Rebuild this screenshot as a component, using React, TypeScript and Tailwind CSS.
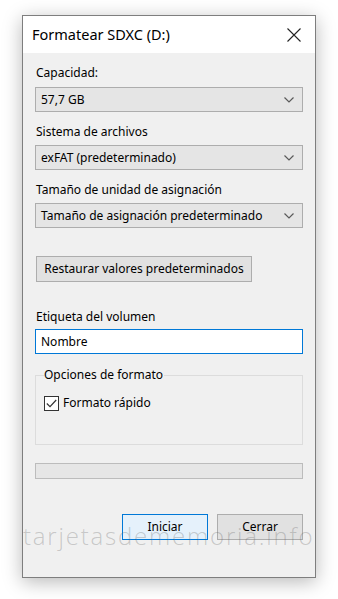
import React from "react";

const font = { fontFamily: '"Noto Sans", "Segoe UI", Arial, sans-serif' };

function Chevron() {
  return (
    <svg width="10" height="6" viewBox="0 0 10 6" className="shrink-0">
      <path d="M0.5 0.5 L5 5 L9.5 0.5" fill="none" stroke="#5a5a5a" strokeWidth="1.2" />
    </svg>
  );
}

function Select({ value }: { value: string }) {
  return (
    <div className="flex h-[25px] items-center justify-between border border-[#adadad] bg-[#e5e5e5] pl-[5px] pr-[8px] text-[12px] text-black">
      <span className="whitespace-nowrap">{value}</span>
      <Chevron />
    </div>
  );
}

function Label({ children, className = "" }: { children: React.ReactNode; className?: string }) {
  return <div className={"h-[16px] whitespace-nowrap pl-[1px] text-[12px] leading-[16px] text-black " + className}>{children}</div>;
}

export default function App() {
  return (
    <div className="relative h-[599px] w-[338px] overflow-hidden bg-white" style={font}>
      <div className="ml-[22px] mt-[15px] flex h-[563px] w-[294px] flex-col border border-[#7e7e7e] bg-[#f0f0f0] shadow-[0_4px_18px_rgba(0,0,0,0.28)]">
        <div className="flex h-[37px] shrink-0 items-center justify-between bg-white pl-[9px] pr-[14px]">
          <span className="text-[14.5px] text-black">Formatear SDXC (D:)</span>
          <svg width="14" height="14" viewBox="0 0 14 14">
            <path d="M0.5 0.5 L13.5 13.5 M13.5 0.5 L0.5 13.5" stroke="#222" strokeWidth="1.1" />
          </svg>
        </div>
        <div className="flex flex-col px-[12px] pt-[12px]">
          <Label>Capacidad:</Label>
          <div className="mt-[6px]">
            <Select value="57,7 GB" />
          </div>
          <Label className="mt-[12px]">Sistema de archivos</Label>
          <div className="mt-[5px]">
            <Select value="exFAT (predeterminado)" />
          </div>
          <Label className="mt-[12px]">Tamaño de unidad de asignación</Label>
          <div className="mt-[5px]">
            <Select value="Tamaño de asignación predeterminado" />
          </div>
          <div className="mt-[28px] flex">
            <div className="ml-[1px] flex h-[26px] w-[216px] items-center justify-center whitespace-nowrap border border-[#adadad] bg-[#e1e1e1] text-[12px] text-black">
              Restaurar valores predeterminados
            </div>
          </div>
          <Label className="mt-[27px]">Etiqueta del volumen</Label>
          <div className="mt-[4px] flex h-[25px] items-center border border-[#0078d7] bg-white pl-[5px] text-[12px] text-black">
            Nombre
          </div>
          <div className="relative mt-[21px] h-[70px] border border-[#dcdcdc]">
            <div className="absolute left-[8px] top-[-9px] whitespace-nowrap bg-[#f0f0f0] pr-[1px] text-[12px] leading-[16px] text-black">
              Opciones de formato
            </div>
            <div className="ml-[8px] mt-[19px] flex items-center gap-[4px]">
              <div className="flex h-[15px] w-[15px] items-center justify-center border border-[#333] bg-white">
                <svg width="11" height="9" viewBox="0 0 11 9">
                  <path d="M0.8 4.5 L4 7.6 L10.2 1" fill="none" stroke="#333" strokeWidth="1.2" />
                </svg>
              </div>
              <span className="text-[12px] leading-[16px] text-black">Formato rápido</span>
            </div>
          </div>
          <div className="mt-[18px] h-[16px] border border-[#bcbcbc] bg-[#e6e6e6]" />
          <div className="mt-[35px] flex justify-end gap-[9px]">
            <div className="flex h-[26px] w-[86px] items-center justify-center border border-[#0078d7] bg-[#e5f1fb] text-[12px] text-black">
              Iniciar
            </div>
            <div className="flex h-[26px] w-[86px] items-center justify-center border border-[#adadad] bg-[#e1e1e1] text-[12px] text-black">
              Cerrar
            </div>
          </div>
        </div>
      </div>
      <div
        className="pointer-events-none absolute left-[23px] top-[521px] whitespace-nowrap text-[24px] font-light leading-[30px] tracking-[1.8px] text-[rgba(100,100,100,0.3)]"
        style={{ fontFamily: '"Open Sans", "Noto Sans", sans-serif' }}
      >
        tarjetasdememoria.info
      </div>
    </div>
  );
}
